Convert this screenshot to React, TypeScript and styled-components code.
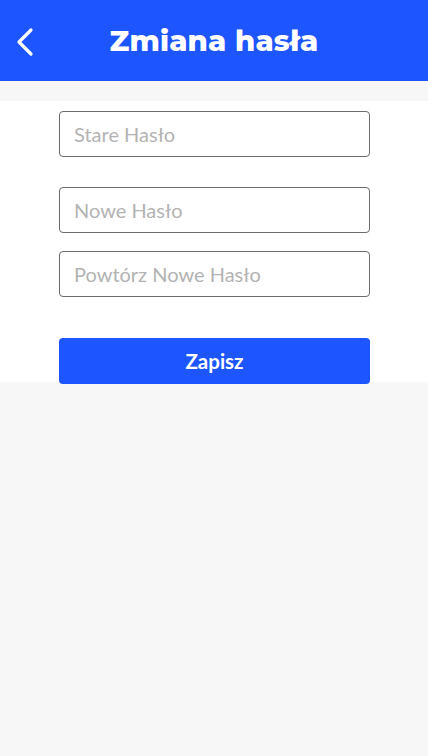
import React from "react";
import styled, { createGlobalStyle } from "styled-components";

const Global = createGlobalStyle`
  html, body { margin: 0; padding: 0; background: #f7f7f7; }
  body { font-family: Lato, "Open Sans", sans-serif; }
  * { box-sizing: border-box; }
`;

const Page = styled.div`
  min-height: 756px;
  background: #f7f7f7;
  display: flex;
  flex-direction: column;
`;

const Header = styled.header`
  height: 81px;
  flex-shrink: 0;
  background: #1d55fe;
  display: flex;
  align-items: center;
  justify-content: center;
  position: relative;
`;

const BackButton = styled.button`
  position: absolute;
  left: 12px;
  top: 25px;
  width: 26px;
  height: 34px;
  padding: 0;
  border: none;
  background: transparent;
  display: flex;
  align-items: center;
  justify-content: center;
  cursor: pointer;
`;

const Title = styled.h1`
  margin: 0;
  color: #ffffff;
  font-family: Montserrat, "Open Sans", sans-serif;
  font-weight: 800;
  font-size: 29px;
  letter-spacing: 0.2px;
  line-height: 1;
  padding-bottom: 1px;
`;

const Gap = styled.div`
  height: 20px;
  flex-shrink: 0;
`;

const Panel = styled.form`
  background: #ffffff;
  height: 281px;
  flex-shrink: 0;
  padding: 10px 58px 0 59px;
  display: flex;
  flex-direction: column;
`;

const Input = styled.input<{ $mt?: number }>`
  width: 311px;
  height: 46px;
  flex-shrink: 0;
  margin-top: ${(p) => p.$mt ?? 0}px;
  border: 1px solid #6b6b6b;
  border-radius: 4px;
  padding: 0 14px;
  font-family: Lato, "Open Sans", sans-serif;
  font-size: 20px;
  color: #333;
  background: #fff;
  outline: none;
  &::placeholder { color: #b3b3b3; }
`;

const SaveButton = styled.button`
  width: 311px;
  height: 46px;
  flex-shrink: 0;
  margin-top: 41px;
  border: none;
  border-radius: 4px;
  background: #1d55fe;
  color: #fff;
  font-family: Lato, "Open Sans", sans-serif;
  font-weight: 700;
  font-size: 20.5px;
  cursor: pointer;
`;

export default function App() {
  return (
    <Page>
      <Global />
      <Header>
        <BackButton type="button" aria-label="Wstecz">
          <svg width="20" height="30" viewBox="0 0 20 30" fill="none">
            <path d="M16 3 L4 15 L16 27" stroke="#fff" strokeWidth="3.2" strokeLinecap="round" strokeLinejoin="round" />
          </svg>
        </BackButton>
        <Title>Zmiana hasła</Title>
      </Header>
      <Gap />
      <Panel onSubmit={(e) => e.preventDefault()}>
        <Input type="password" placeholder="Stare Hasło" />
        <Input type="password" placeholder="Nowe Hasło" $mt={30} />
        <Input type="password" placeholder="Powtórz Nowe Hasło" $mt={18} />
        <SaveButton type="submit">Zapisz</SaveButton>
      </Panel>
    </Page>
  );
}
